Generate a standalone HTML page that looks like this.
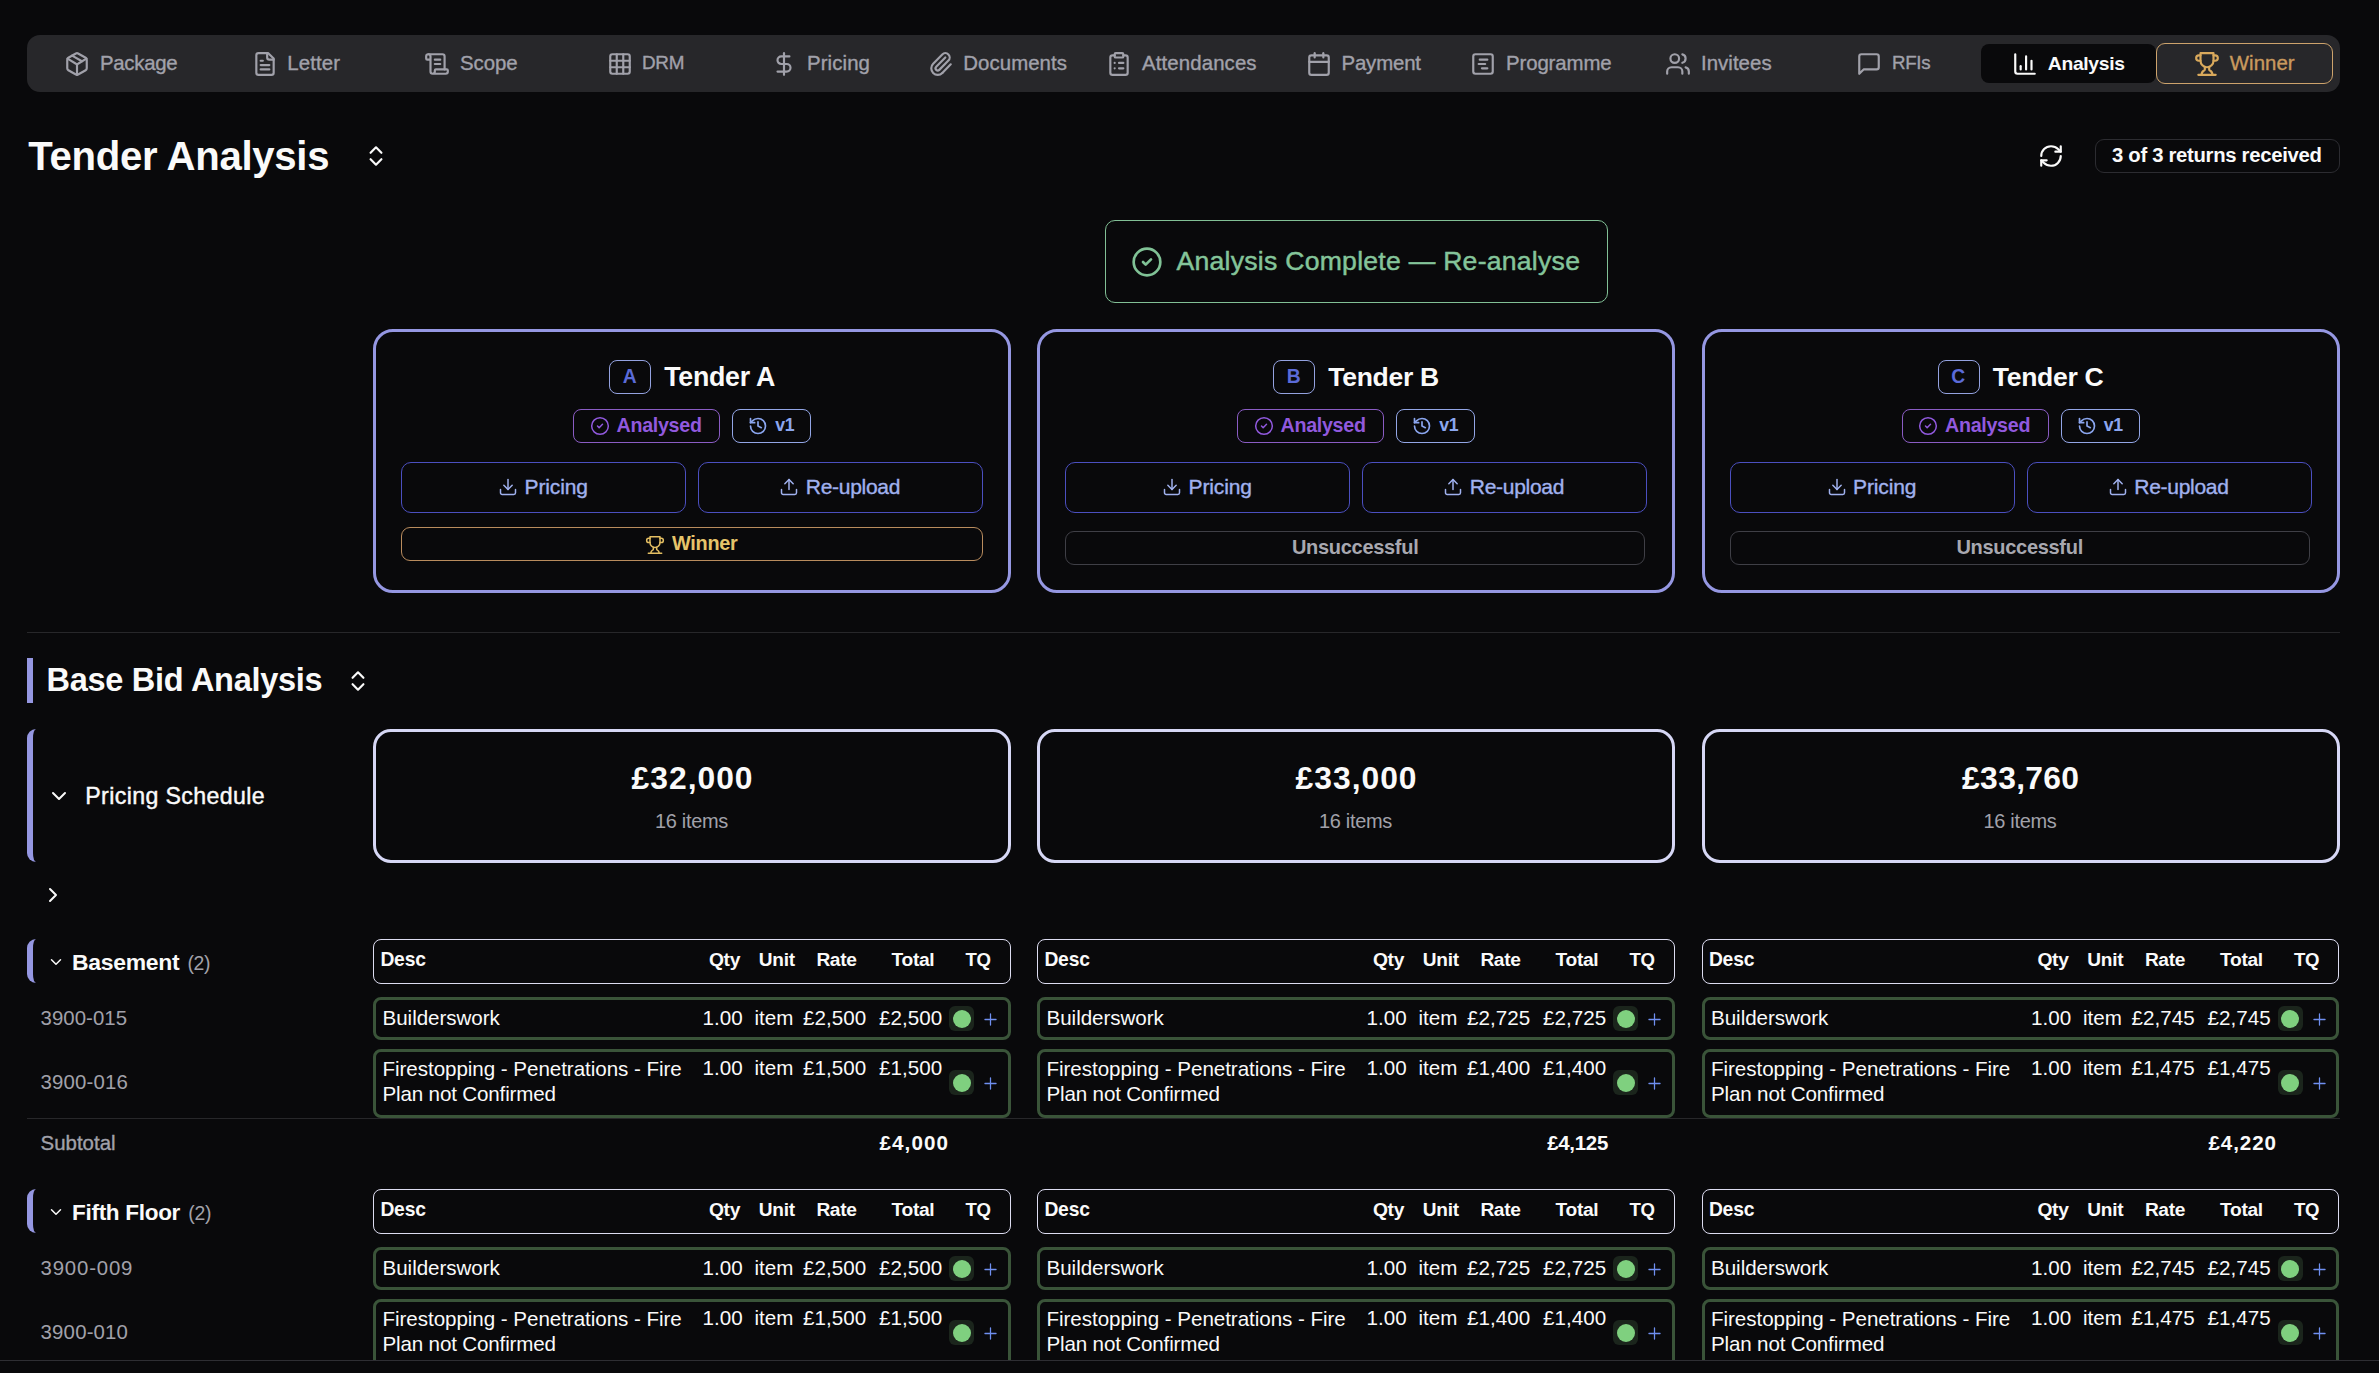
<!DOCTYPE html>
<html><head><meta charset="utf-8"><title>Tender Analysis</title>
<style>
html,body{margin:0;padding:0;}
body{width:2379px;height:1373px;overflow:hidden;background:#09090b;position:relative;font-family:"Liberation Sans",sans-serif;}
.t{position:absolute;white-space:nowrap;line-height:1;}
.b{position:absolute;box-sizing:border-box;}
.i{position:absolute;overflow:visible;}
</style></head><body>
<div class="b" style="left:27.00px;top:35.00px;width:2313.00px;height:57.00px;background:#27272a;border-radius:13px;"></div>
<div class="b" style="left:1981.00px;top:44.00px;width:175.00px;height:39.00px;background:#09090b;border-radius:8px;"></div>
<div class="b" style="left:2156.00px;top:43.00px;width:177.00px;height:41.00px;border:1px solid #cda36c;border-radius:9px;"></div>
<svg class="i" style="left:63.50px;top:50.80px;width:26px;height:26px" viewBox="0 0 24 24" fill="none" stroke="#a1a1aa" stroke-width="2" stroke-linecap="round" stroke-linejoin="round"><path d="M11 21.73a2 2 0 0 0 2 0l7-4A2 2 0 0 0 21 16V8a2 2 0 0 0-1-1.73l-7-4a2 2 0 0 0-2 0l-7 4A2 2 0 0 0 3 8v8a2 2 0 0 0 1 1.73z"/><path d="M12 22V12"/><path d="m3.3 7 7.703 4.734a2 2 0 0 0 1.994 0L20.7 7"/><path d="m7.5 4.27 9 5.15"/></svg>
<div class="t" style="left:100.00px;top:52.93px;font-size:20.40px;color:#a1a1aa;letter-spacing:-0.283px;-webkit-text-stroke:0.36px #a1a1aa;">Package</div>
<svg class="i" style="left:252.00px;top:50.80px;width:26px;height:26px" viewBox="0 0 24 24" fill="none" stroke="#a1a1aa" stroke-width="2" stroke-linecap="round" stroke-linejoin="round"><path d="M15 2H6a2 2 0 0 0-2 2v16a2 2 0 0 0 2 2h12a2 2 0 0 0 2-2V7Z"/><path d="M14 2v4a2 2 0 0 0 2 2h4"/><path d="M10 9H8"/><path d="M16 13H8"/><path d="M16 17H8"/></svg>
<div class="t" style="left:287.30px;top:52.93px;font-size:20.40px;color:#a1a1aa;letter-spacing:0.100px;-webkit-text-stroke:0.36px #a1a1aa;">Letter</div>
<svg class="i" style="left:423.60px;top:50.80px;width:26px;height:26px" viewBox="0 0 24 24" fill="none" stroke="#a1a1aa" stroke-width="2" stroke-linecap="round" stroke-linejoin="round"><path d="M15 12h-5"/><path d="M15 8h-5"/><path d="M19 17V5a2 2 0 0 0-2-2H4"/><path d="M8 21h12a2 2 0 0 0 2-2v-1a1 1 0 0 0-1-1H11a1 1 0 0 0-1 1v1a2 2 0 1 1-4 0V5a2 2 0 1 0-4 0v2a1 1 0 0 0 1 1h3"/></svg>
<div class="t" style="left:460.00px;top:52.93px;font-size:20.40px;color:#a1a1aa;letter-spacing:-0.075px;-webkit-text-stroke:0.36px #a1a1aa;">Scope</div>
<svg class="i" style="left:607.00px;top:50.80px;width:26px;height:26px" viewBox="0 0 24 24" fill="none" stroke="#a1a1aa" stroke-width="2" stroke-linecap="round" stroke-linejoin="round"><rect width="18" height="18" x="3" y="3" rx="2"/><path d="M3 9h18"/><path d="M3 15h18"/><path d="M9 3v18"/><path d="M15 3v18"/></svg>
<div class="t" style="left:642.00px;top:54.23px;font-size:18.86px;color:#a1a1aa;letter-spacing:-0.300px;-webkit-text-stroke:0.36px #a1a1aa;">DRM</div>
<svg class="i" style="left:770.70px;top:50.80px;width:26px;height:26px" viewBox="0 0 24 24" fill="none" stroke="#a1a1aa" stroke-width="2" stroke-linecap="round" stroke-linejoin="round"><line x1="12" x2="12" y1="2" y2="22"/><path d="M17 5H9.5a3.5 3.5 0 0 0 0 7h5a3.5 3.5 0 0 1 0 7H6"/></svg>
<div class="t" style="left:807.00px;top:52.93px;font-size:20.40px;color:#a1a1aa;letter-spacing:0.100px;-webkit-text-stroke:0.36px #a1a1aa;">Pricing</div>
<svg class="i" style="left:927.60px;top:50.80px;width:26px;height:26px" viewBox="0 0 24 24" fill="none" stroke="#a1a1aa" stroke-width="2" stroke-linecap="round" stroke-linejoin="round"><path d="M13.234 20.252 21 12.3"/><path d="m16 6-8.414 8.586a2 2 0 0 0 0 2.828 2 2 0 0 0 2.828 0l8.414-8.586a4 4 0 0 0 0-5.656 4 4 0 0 0-5.656 0l-8.415 8.585a6 6 0 1 0 8.486 8.486"/></svg>
<div class="t" style="left:963.30px;top:52.93px;font-size:20.40px;color:#a1a1aa;letter-spacing:0.063px;-webkit-text-stroke:0.36px #a1a1aa;">Documents</div>
<svg class="i" style="left:1105.60px;top:50.80px;width:26px;height:26px" viewBox="0 0 24 24" fill="none" stroke="#a1a1aa" stroke-width="2" stroke-linecap="round" stroke-linejoin="round"><rect width="8" height="4" x="8" y="2" rx="1" ry="1"/><path d="M16 4h2a2 2 0 0 1 2 2v14a2 2 0 0 1-2 2H6a2 2 0 0 1-2-2V6a2 2 0 0 1 2-2h2"/><path d="M12 11h4"/><path d="M12 16h4"/><path d="M8 11h.01"/><path d="M8 16h.01"/></svg>
<div class="t" style="left:1142.00px;top:52.93px;font-size:20.40px;color:#a1a1aa;letter-spacing:0.120px;-webkit-text-stroke:0.36px #a1a1aa;">Attendances</div>
<svg class="i" style="left:1305.50px;top:50.80px;width:26px;height:26px" viewBox="0 0 24 24" fill="none" stroke="#a1a1aa" stroke-width="2" stroke-linecap="round" stroke-linejoin="round"><path d="M8 2v4"/><path d="M16 2v4"/><rect width="18" height="18" x="3" y="4" rx="2"/><path d="M3 10h18"/></svg>
<div class="t" style="left:1341.50px;top:52.93px;font-size:20.40px;color:#a1a1aa;letter-spacing:-0.167px;-webkit-text-stroke:0.36px #a1a1aa;">Payment</div>
<svg class="i" style="left:1469.50px;top:50.80px;width:26px;height:26px" viewBox="0 0 24 24" fill="none" stroke="#a1a1aa" stroke-width="2" stroke-linecap="round" stroke-linejoin="round"><rect width="18" height="18" x="3" y="3" rx="2"/><path d="M9 8h7"/><path d="M8 12h6"/><path d="M11 16h5"/></svg>
<div class="t" style="left:1506.00px;top:52.93px;font-size:20.40px;color:#a1a1aa;letter-spacing:-0.112px;-webkit-text-stroke:0.36px #a1a1aa;">Programme</div>
<svg class="i" style="left:1664.70px;top:50.80px;width:26px;height:26px" viewBox="0 0 24 24" fill="none" stroke="#a1a1aa" stroke-width="2" stroke-linecap="round" stroke-linejoin="round"><path d="M16 21v-2a4 4 0 0 0-4-4H6a4 4 0 0 0-4 4v2"/><circle cx="9" cy="7" r="4"/><path d="M22 21v-2a4 4 0 0 0-3-3.87"/><path d="M16 3.13a4 4 0 0 1 0 7.75"/></svg>
<div class="t" style="left:1701.00px;top:52.93px;font-size:20.40px;color:#a1a1aa;letter-spacing:0.043px;-webkit-text-stroke:0.36px #a1a1aa;">Invitees</div>
<svg class="i" style="left:1855.50px;top:50.80px;width:26px;height:26px" viewBox="0 0 24 24" fill="none" stroke="#a1a1aa" stroke-width="2" stroke-linecap="round" stroke-linejoin="round"><path d="M21 15a2 2 0 0 1-2 2H7l-4 4V5a2 2 0 0 1 2-2h14a2 2 0 0 1 2 2z"/></svg>
<div class="t" style="left:1892.00px;top:54.33px;font-size:18.74px;color:#a1a1aa;letter-spacing:-0.300px;-webkit-text-stroke:0.36px #a1a1aa;">RFIs</div>
<svg class="i" style="left:2011.70px;top:50.80px;width:26px;height:26px" viewBox="0 0 24 24" fill="none" stroke="#fafafa" stroke-width="2" stroke-linecap="round" stroke-linejoin="round"><path d="M3 3v16a2 2 0 0 0 2 2h16"/><path d="M18 17V9"/><path d="M13 17V5"/><path d="M8 17v-3"/></svg>
<div class="t" style="left:2047.80px;top:53.87px;font-size:19.28px;font-weight:700;color:#fafafa;letter-spacing:-0.300px;">Analysis</div>
<svg class="i" style="left:2193.50px;top:50.80px;width:26px;height:26px" viewBox="0 0 24 24" fill="none" stroke="#d9a95c" stroke-width="2" stroke-linecap="round" stroke-linejoin="round"><path d="M6 9H4.5a2.5 2.5 0 0 1 0-5H6"/><path d="M18 9h1.5a2.5 2.5 0 0 0 0-5H18"/><path d="M4 22h16"/><path d="M10 14.66V17c0 .55-.47.98-.97 1.21C7.85 18.75 7 20.24 7 22"/><path d="M14 14.66V17c0 .55.47.98.97 1.21C16.15 18.75 17 20.24 17 22"/><path d="M18 2H6v7a6 6 0 0 0 12 0V2Z"/></svg>
<div class="t" style="left:2229.80px;top:52.93px;font-size:20.40px;color:#c99a5e;letter-spacing:0.040px;-webkit-text-stroke:0.36px #c99a5e;">Winner</div>
<div class="t" style="left:28.30px;top:137.23px;font-size:40.12px;font-weight:700;color:#fafafa;letter-spacing:-0.300px;">Tender Analysis</div>
<svg class="i" style="left:362.50px;top:142.70px;width:26px;height:26px" viewBox="0 0 24 24" fill="none" stroke="#fafafa" stroke-width="2" stroke-linecap="round" stroke-linejoin="round"><path d="m7 15 5 5 5-5"/><path d="m7 9 5-5 5 5"/></svg>
<svg class="i" style="left:2038.00px;top:143.00px;width:26px;height:26px" viewBox="0 0 24 24" fill="none" stroke="#fafafa" stroke-width="2" stroke-linecap="round" stroke-linejoin="round"><path d="M3 12a9 9 0 0 1 9-9 9.75 9.75 0 0 1 6.74 2.74L21 8"/><path d="M21 3v5h-5"/><path d="M21 12a9 9 0 0 1-9 9 9.75 9.75 0 0 1-6.74-2.74L3 16"/><path d="M8 16H3v5"/></svg>
<div class="b" style="left:2095.00px;top:139.00px;width:245.00px;height:34.00px;border:1px solid #2c2c31;border-radius:9px;"></div>
<div class="t" style="left:2112.00px;top:145.11px;font-size:20.30px;font-weight:700;color:#fafafa;letter-spacing:-0.300px;">3 of 3 returns received</div>
<div class="b" style="left:1105.00px;top:220.00px;width:503.00px;height:83.00px;border:1px solid #82c096;border-radius:10px;"></div>
<svg class="i" style="left:1131.00px;top:246.00px;width:32px;height:32px" viewBox="0 0 24 24" fill="none" stroke="#80c296" stroke-width="2" stroke-linecap="round" stroke-linejoin="round"><circle cx="12" cy="12" r="10"/><path d="m9 12 2 2 4-4"/></svg>
<div class="t" style="left:1176.50px;top:248.08px;font-size:26.60px;color:#84c49a;letter-spacing:0.252px;-webkit-text-stroke:0.47px #84c49a;">Analysis Complete — Re-analyse</div>
<div class="b" style="left:373.00px;top:329.00px;width:638.00px;height:263.50px;border:3px solid #9597e2;border-radius:20px;"></div>
<div class="b" style="left:609.00px;top:360.00px;width:42.00px;height:34.00px;border:1px solid #94a2e0;border-radius:8px;"></div>
<div class="t" style="left:622.75px;top:366.86px;font-size:19.30px;font-weight:700;color:#5b6bd8;letter-spacing:0.000px;">A</div>
<div class="t" style="left:664.30px;top:363.93px;font-size:26.78px;font-weight:700;color:#fafafa;letter-spacing:-0.300px;">Tender A</div>
<div class="b" style="left:573.00px;top:409.00px;width:147.00px;height:34.00px;border:1px solid #8a5cc4;border-radius:8px;"></div>
<svg class="i" style="left:589.50px;top:415.70px;width:20px;height:20px" viewBox="0 0 24 24" fill="none" stroke="#9159de" stroke-width="1.8" stroke-linecap="round" stroke-linejoin="round"><circle cx="12" cy="12" r="10"/><path d="m9 12 2 2 4-4"/></svg>
<div class="t" style="left:616.60px;top:415.65px;font-size:19.67px;font-weight:700;color:#9159de;letter-spacing:-0.300px;">Analysed</div>
<div class="b" style="left:732.00px;top:409.00px;width:79.00px;height:34.00px;border:1px solid #93a6e6;border-radius:8px;"></div>
<svg class="i" style="left:748.40px;top:415.70px;width:20px;height:20px" viewBox="0 0 24 24" fill="none" stroke="#8ba6ef" stroke-width="2" stroke-linecap="round" stroke-linejoin="round"><path d="M3 12a9 9 0 1 0 9-9 9.75 9.75 0 0 0-6.74 2.74L3 8"/><path d="M3 3v5h5"/><path d="M12 7v5l4 2"/></svg>
<div class="t" style="left:775.30px;top:417.30px;font-size:17.71px;font-weight:700;color:#8ba6ef;letter-spacing:-0.300px;">v1</div>
<div class="b" style="left:401.00px;top:462.00px;width:285.00px;height:51.00px;border:1px solid #4b4fc0;border-radius:10px;"></div>
<svg class="i" style="left:498.40px;top:477.40px;width:20px;height:20px" viewBox="0 0 24 24" fill="none" stroke="#a0b1ee" stroke-width="1.8" stroke-linecap="round" stroke-linejoin="round"><path d="M21 15v4a2 2 0 0 1-2 2H5a2 2 0 0 1-2-2v-4"/><polyline points="7 10 12 15 17 10"/><line x1="12" x2="12" y1="15" y2="3"/></svg>
<div class="t" style="left:524.50px;top:476.42px;font-size:21.00px;color:#a0b1ee;letter-spacing:-0.117px;-webkit-text-stroke:0.37px #a0b1ee;">Pricing</div>
<div class="b" style="left:698.00px;top:462.00px;width:285.00px;height:51.00px;border:1px solid #4b4fc0;border-radius:10px;"></div>
<svg class="i" style="left:779.40px;top:477.40px;width:20px;height:20px" viewBox="0 0 24 24" fill="none" stroke="#a0b1ee" stroke-width="1.8" stroke-linecap="round" stroke-linejoin="round"><path d="M21 15v4a2 2 0 0 1-2 2H5a2 2 0 0 1-2-2v-4"/><polyline points="17 8 12 3 7 8"/><line x1="12" x2="12" y1="3" y2="15"/></svg>
<div class="t" style="left:805.80px;top:476.42px;font-size:21.00px;color:#a0b1ee;letter-spacing:-0.288px;-webkit-text-stroke:0.37px #a0b1ee;">Re-upload</div>
<div class="b" style="left:401.00px;top:527.00px;width:582.00px;height:34.00px;border:1px solid #b98c5e;border-radius:9px;"></div>
<svg class="i" style="left:645.40px;top:534.90px;width:20px;height:20px" viewBox="0 0 24 24" fill="none" stroke="#e3be62" stroke-width="1.8" stroke-linecap="round" stroke-linejoin="round"><path d="M6 9H4.5a2.5 2.5 0 0 1 0-5H6"/><path d="M18 9h1.5a2.5 2.5 0 0 0 0-5H18"/><path d="M4 22h16"/><path d="M10 14.66V17c0 .55-.47.98-.97 1.21C7.85 18.75 7 20.24 7 22"/><path d="M14 14.66V17c0 .55.47.98.97 1.21C16.15 18.75 17 20.24 17 22"/><path d="M18 2H6v7a6 6 0 0 0 12 0V2Z"/></svg>
<div class="t" style="left:672.00px;top:534.05px;font-size:19.90px;font-weight:700;color:#e6c46a;letter-spacing:-0.300px;">Winner</div>
<div class="b" style="left:1037.00px;top:329.00px;width:638.00px;height:263.50px;border:3px solid #9597e2;border-radius:20px;"></div>
<div class="b" style="left:1273.00px;top:360.00px;width:42.00px;height:34.00px;border:1px solid #94a2e0;border-radius:8px;"></div>
<div class="t" style="left:1286.75px;top:366.86px;font-size:19.30px;font-weight:700;color:#5b6bd8;letter-spacing:0.000px;">B</div>
<div class="t" style="left:1328.30px;top:364.11px;font-size:26.56px;font-weight:700;color:#fafafa;letter-spacing:-0.300px;">Tender B</div>
<div class="b" style="left:1237.00px;top:409.00px;width:147.00px;height:34.00px;border:1px solid #8a5cc4;border-radius:8px;"></div>
<svg class="i" style="left:1253.50px;top:415.70px;width:20px;height:20px" viewBox="0 0 24 24" fill="none" stroke="#9159de" stroke-width="1.8" stroke-linecap="round" stroke-linejoin="round"><circle cx="12" cy="12" r="10"/><path d="m9 12 2 2 4-4"/></svg>
<div class="t" style="left:1280.60px;top:415.65px;font-size:19.67px;font-weight:700;color:#9159de;letter-spacing:-0.300px;">Analysed</div>
<div class="b" style="left:1396.00px;top:409.00px;width:79.00px;height:34.00px;border:1px solid #93a6e6;border-radius:8px;"></div>
<svg class="i" style="left:1412.40px;top:415.70px;width:20px;height:20px" viewBox="0 0 24 24" fill="none" stroke="#8ba6ef" stroke-width="2" stroke-linecap="round" stroke-linejoin="round"><path d="M3 12a9 9 0 1 0 9-9 9.75 9.75 0 0 0-6.74 2.74L3 8"/><path d="M3 3v5h5"/><path d="M12 7v5l4 2"/></svg>
<div class="t" style="left:1439.30px;top:417.30px;font-size:17.71px;font-weight:700;color:#8ba6ef;letter-spacing:-0.300px;">v1</div>
<div class="b" style="left:1065.00px;top:462.00px;width:285.00px;height:51.00px;border:1px solid #4b4fc0;border-radius:10px;"></div>
<svg class="i" style="left:1162.40px;top:477.40px;width:20px;height:20px" viewBox="0 0 24 24" fill="none" stroke="#a0b1ee" stroke-width="1.8" stroke-linecap="round" stroke-linejoin="round"><path d="M21 15v4a2 2 0 0 1-2 2H5a2 2 0 0 1-2-2v-4"/><polyline points="7 10 12 15 17 10"/><line x1="12" x2="12" y1="15" y2="3"/></svg>
<div class="t" style="left:1188.50px;top:476.42px;font-size:21.00px;color:#a0b1ee;letter-spacing:-0.117px;-webkit-text-stroke:0.37px #a0b1ee;">Pricing</div>
<div class="b" style="left:1362.00px;top:462.00px;width:285.00px;height:51.00px;border:1px solid #4b4fc0;border-radius:10px;"></div>
<svg class="i" style="left:1443.40px;top:477.40px;width:20px;height:20px" viewBox="0 0 24 24" fill="none" stroke="#a0b1ee" stroke-width="1.8" stroke-linecap="round" stroke-linejoin="round"><path d="M21 15v4a2 2 0 0 1-2 2H5a2 2 0 0 1-2-2v-4"/><polyline points="17 8 12 3 7 8"/><line x1="12" x2="12" y1="3" y2="15"/></svg>
<div class="t" style="left:1469.80px;top:476.42px;font-size:21.00px;color:#a0b1ee;letter-spacing:-0.288px;-webkit-text-stroke:0.37px #a0b1ee;">Re-upload</div>
<div class="b" style="left:1065.00px;top:531.00px;width:580.00px;height:34.00px;border:1px solid #3f3f46;border-radius:9px;"></div>
<div class="t" style="left:1291.95px;top:537.48px;font-size:19.99px;font-weight:700;color:#a8a8b0;letter-spacing:-0.291px;">Unsuccessful</div>
<div class="b" style="left:1702.00px;top:329.00px;width:638.00px;height:263.50px;border:3px solid #9597e2;border-radius:20px;"></div>
<div class="b" style="left:1937.50px;top:360.00px;width:42.00px;height:34.00px;border:1px solid #94a2e0;border-radius:8px;"></div>
<div class="t" style="left:1951.25px;top:366.86px;font-size:19.30px;font-weight:700;color:#5b6bd8;letter-spacing:0.000px;">C</div>
<div class="t" style="left:1992.80px;top:364.11px;font-size:26.56px;font-weight:700;color:#fafafa;letter-spacing:-0.300px;">Tender C</div>
<div class="b" style="left:1901.50px;top:409.00px;width:147.00px;height:34.00px;border:1px solid #8a5cc4;border-radius:8px;"></div>
<svg class="i" style="left:1918.00px;top:415.70px;width:20px;height:20px" viewBox="0 0 24 24" fill="none" stroke="#9159de" stroke-width="1.8" stroke-linecap="round" stroke-linejoin="round"><circle cx="12" cy="12" r="10"/><path d="m9 12 2 2 4-4"/></svg>
<div class="t" style="left:1945.10px;top:415.65px;font-size:19.67px;font-weight:700;color:#9159de;letter-spacing:-0.300px;">Analysed</div>
<div class="b" style="left:2060.50px;top:409.00px;width:79.00px;height:34.00px;border:1px solid #93a6e6;border-radius:8px;"></div>
<svg class="i" style="left:2076.90px;top:415.70px;width:20px;height:20px" viewBox="0 0 24 24" fill="none" stroke="#8ba6ef" stroke-width="2" stroke-linecap="round" stroke-linejoin="round"><path d="M3 12a9 9 0 1 0 9-9 9.75 9.75 0 0 0-6.74 2.74L3 8"/><path d="M3 3v5h5"/><path d="M12 7v5l4 2"/></svg>
<div class="t" style="left:2103.80px;top:417.30px;font-size:17.71px;font-weight:700;color:#8ba6ef;letter-spacing:-0.300px;">v1</div>
<div class="b" style="left:1729.50px;top:462.00px;width:285.00px;height:51.00px;border:1px solid #4b4fc0;border-radius:10px;"></div>
<svg class="i" style="left:1826.90px;top:477.40px;width:20px;height:20px" viewBox="0 0 24 24" fill="none" stroke="#a0b1ee" stroke-width="1.8" stroke-linecap="round" stroke-linejoin="round"><path d="M21 15v4a2 2 0 0 1-2 2H5a2 2 0 0 1-2-2v-4"/><polyline points="7 10 12 15 17 10"/><line x1="12" x2="12" y1="15" y2="3"/></svg>
<div class="t" style="left:1853.00px;top:476.42px;font-size:21.00px;color:#a0b1ee;letter-spacing:-0.117px;-webkit-text-stroke:0.37px #a0b1ee;">Pricing</div>
<div class="b" style="left:2026.50px;top:462.00px;width:285.00px;height:51.00px;border:1px solid #4b4fc0;border-radius:10px;"></div>
<svg class="i" style="left:2107.90px;top:477.40px;width:20px;height:20px" viewBox="0 0 24 24" fill="none" stroke="#a0b1ee" stroke-width="1.8" stroke-linecap="round" stroke-linejoin="round"><path d="M21 15v4a2 2 0 0 1-2 2H5a2 2 0 0 1-2-2v-4"/><polyline points="17 8 12 3 7 8"/><line x1="12" x2="12" y1="3" y2="15"/></svg>
<div class="t" style="left:2134.30px;top:476.42px;font-size:21.00px;color:#a0b1ee;letter-spacing:-0.288px;-webkit-text-stroke:0.37px #a0b1ee;">Re-upload</div>
<div class="b" style="left:1729.50px;top:531.00px;width:580.00px;height:34.00px;border:1px solid #3f3f46;border-radius:9px;"></div>
<div class="t" style="left:1956.45px;top:537.48px;font-size:19.99px;font-weight:700;color:#a8a8b0;letter-spacing:-0.291px;">Unsuccessful</div>
<div class="b" style="left:27.00px;top:632.00px;width:2313.00px;height:1.00px;background:#27272a;"></div>
<div class="b" style="left:27.00px;top:658.00px;width:6.00px;height:45.00px;background:#9597e2;"></div>
<div class="t" style="left:46.50px;top:663.93px;font-size:32.56px;font-weight:700;color:#fafafa;letter-spacing:-0.300px;">Base Bid Analysis</div>
<svg class="i" style="left:344.50px;top:667.50px;width:26px;height:26px" viewBox="0 0 24 24" fill="none" stroke="#fafafa" stroke-width="2" stroke-linecap="round" stroke-linejoin="round"><path d="m7 15 5 5 5-5"/><path d="m7 9 5-5 5 5"/></svg>
<div class="b" style="left:27.00px;top:729.00px;width:60.00px;height:133.00px;border-left:6px solid #9597e2;border-radius:9px;"></div>
<svg class="i" style="left:46.80px;top:784.00px;width:24px;height:24px" viewBox="0 0 24 24" fill="none" stroke="#fafafa" stroke-width="2" stroke-linecap="round" stroke-linejoin="round"><path d="m6 9 6 6 6-6"/></svg>
<div class="t" style="left:85.30px;top:784.66px;font-size:23.20px;color:#fafafa;letter-spacing:0.360px;-webkit-text-stroke:0.41px #fafafa;">Pricing Schedule</div>
<div class="b" style="left:373.00px;top:729.00px;width:638.00px;height:134.00px;border:3px solid #d6d7f5;border-radius:18px;"></div>
<div class="t" style="left:631.60px;top:763.07px;font-size:31.80px;font-weight:700;color:#fafafa;letter-spacing:1.000px;">£32,000</div>
<div class="t" style="left:654.90px;top:810.88px;font-size:19.99px;color:#a1a1aa;letter-spacing:-0.300px;">16 items</div>
<div class="b" style="left:1037.00px;top:729.00px;width:638.00px;height:134.00px;border:3px solid #d6d7f5;border-radius:18px;"></div>
<div class="t" style="left:1295.60px;top:763.07px;font-size:31.80px;font-weight:700;color:#fafafa;letter-spacing:1.000px;">£33,000</div>
<div class="t" style="left:1318.90px;top:810.88px;font-size:19.99px;color:#a1a1aa;letter-spacing:-0.300px;">16 items</div>
<div class="b" style="left:1702.00px;top:729.00px;width:638.00px;height:134.00px;border:3px solid #d6d7f5;border-radius:18px;"></div>
<div class="t" style="left:1962.10px;top:763.07px;font-size:31.80px;font-weight:700;color:#fafafa;letter-spacing:0.333px;">£33,760</div>
<div class="t" style="left:1983.40px;top:810.88px;font-size:19.99px;color:#a1a1aa;letter-spacing:-0.300px;">16 items</div>
<svg class="i" style="left:40.70px;top:882.70px;width:24px;height:24px" viewBox="0 0 24 24" fill="none" stroke="#fafafa" stroke-width="2" stroke-linecap="round" stroke-linejoin="round"><path d="m9 18 6-6-6-6"/></svg>
<div class="b" style="left:27.00px;top:939.00px;width:60.00px;height:44.00px;border-left:6px solid #9597e2;border-radius:9px;"></div>
<svg class="i" style="left:46.50px;top:952.60px;width:18px;height:18px" viewBox="0 0 24 24" fill="none" stroke="#fafafa" stroke-width="2" stroke-linecap="round" stroke-linejoin="round"><path d="m6 9 6 6 6-6"/></svg>
<div class="t" style="left:72.00px;top:951.18px;font-size:22.94px;font-weight:700;color:#fafafa;letter-spacing:-0.300px;">Basement</div>
<div class="t" style="left:187.40px;top:954.12px;font-size:19.46px;color:#a1a1aa;letter-spacing:-0.300px;">(2)</div>
<div class="t" style="left:40.60px;top:1007.73px;font-size:20.40px;color:#a1a1aa;letter-spacing:0.029px;">3900-015</div>
<div class="t" style="left:40.60px;top:1071.73px;font-size:20.40px;color:#a1a1aa;letter-spacing:0.157px;">3900-016</div>
<div class="b" style="left:27.00px;top:1118.00px;width:2313.00px;height:1.00px;background:#27272a;"></div>
<div class="t" style="left:40.60px;top:1132.73px;font-size:20.40px;color:#a1a1aa;letter-spacing:0.014px;-webkit-text-stroke:0.36px #a1a1aa;">Subtotal</div>
<div class="b" style="left:373.00px;top:939.00px;width:637.50px;height:44.50px;border:1.5px solid #dcdcf0;border-radius:8px;"></div>
<div class="t" style="left:380.40px;top:950.06px;font-size:19.30px;font-weight:700;color:#fafafa;letter-spacing:-0.200px;">Desc</div>
<div class="t" style="left:709.00px;top:950.11px;font-size:19.24px;font-weight:700;color:#fafafa;letter-spacing:-0.350px;">Qty</div>
<div class="t" style="left:758.80px;top:950.23px;font-size:19.09px;font-weight:700;color:#fafafa;letter-spacing:-0.300px;">Unit</div>
<div class="t" style="left:816.40px;top:950.18px;font-size:19.16px;font-weight:700;color:#fafafa;letter-spacing:-0.367px;">Rate</div>
<div class="t" style="left:891.60px;top:950.13px;font-size:19.21px;font-weight:700;color:#fafafa;letter-spacing:-0.325px;">Total</div>
<div class="t" style="left:965.45px;top:950.67px;font-size:18.58px;font-weight:700;color:#fafafa;letter-spacing:-0.300px;">TQ</div>
<div class="b" style="left:373.00px;top:997.40px;width:637.50px;height:43.00px;border:3px solid #3a5439;border-radius:8px;"></div>
<div class="t" style="left:382.50px;top:1007.86px;font-size:20.60px;color:#fafafa;letter-spacing:-0.045px;">Builderswork</div>
<div class="t" style="left:702.55px;top:1007.86px;font-size:20.60px;color:#fafafa;letter-spacing:0.000px;">1.00</div>
<div class="t" style="left:754.55px;top:1007.86px;font-size:20.60px;color:#fafafa;letter-spacing:0.000px;">item</div>
<div class="t" style="left:803.10px;top:1007.86px;font-size:20.60px;color:#fafafa;letter-spacing:0.000px;">£2,500</div>
<div class="t" style="left:879.10px;top:1007.86px;font-size:20.60px;color:#fafafa;letter-spacing:0.000px;">£2,500</div>
<div class="b" style="left:949.30px;top:1006.40px;width:25.00px;height:25.00px;background:#1b251c;border-radius:6px;"></div>
<div class="b" style="left:952.70px;top:1009.90px;width:18.00px;height:18.00px;background:#7fd07f;border-radius:50%;"></div>
<svg class="i" style="left:981.10px;top:1010.30px;width:19px;height:19px" viewBox="0 0 24 24" fill="none" stroke="#6f8ff0" stroke-width="1.6" stroke-linecap="round" stroke-linejoin="round"><path d="M5 12h14"/><path d="M12 5v14"/></svg>
<div class="b" style="left:373.00px;top:1048.60px;width:637.50px;height:69.50px;border:3px solid #3a5439;border-radius:8px;"></div>
<div class="t" style="left:382.50px;top:1059.06px;font-size:20.60px;color:#fafafa;letter-spacing:-0.055px;">Firestopping - Penetrations - Fire</div>
<div class="t" style="left:382.50px;top:1084.36px;font-size:20.60px;color:#fafafa;letter-spacing:-0.165px;">Plan not Confirmed</div>
<div class="t" style="left:702.55px;top:1058.16px;font-size:20.60px;color:#fafafa;letter-spacing:0.000px;">1.00</div>
<div class="t" style="left:754.55px;top:1058.16px;font-size:20.60px;color:#fafafa;letter-spacing:0.000px;">item</div>
<div class="t" style="left:803.10px;top:1058.16px;font-size:20.60px;color:#fafafa;letter-spacing:0.000px;">£1,500</div>
<div class="t" style="left:879.10px;top:1058.16px;font-size:20.60px;color:#fafafa;letter-spacing:0.000px;">£1,500</div>
<div class="b" style="left:949.30px;top:1070.00px;width:25.00px;height:25.00px;background:#1b251c;border-radius:6px;"></div>
<div class="b" style="left:952.70px;top:1073.50px;width:18.00px;height:18.00px;background:#7fd07f;border-radius:50%;"></div>
<svg class="i" style="left:981.10px;top:1073.50px;width:19px;height:19px" viewBox="0 0 24 24" fill="none" stroke="#6f8ff0" stroke-width="1.6" stroke-linecap="round" stroke-linejoin="round"><path d="M5 12h14"/><path d="M12 5v14"/></svg>
<div class="t" style="left:879.40px;top:1132.56px;font-size:20.60px;font-weight:700;color:#fafafa;letter-spacing:1.120px;">£4,000</div>
<div class="b" style="left:1037.00px;top:939.00px;width:637.50px;height:44.50px;border:1.5px solid #dcdcf0;border-radius:8px;"></div>
<div class="t" style="left:1044.40px;top:950.06px;font-size:19.30px;font-weight:700;color:#fafafa;letter-spacing:-0.200px;">Desc</div>
<div class="t" style="left:1373.00px;top:950.11px;font-size:19.24px;font-weight:700;color:#fafafa;letter-spacing:-0.350px;">Qty</div>
<div class="t" style="left:1422.80px;top:950.23px;font-size:19.09px;font-weight:700;color:#fafafa;letter-spacing:-0.300px;">Unit</div>
<div class="t" style="left:1480.40px;top:950.18px;font-size:19.16px;font-weight:700;color:#fafafa;letter-spacing:-0.367px;">Rate</div>
<div class="t" style="left:1555.60px;top:950.13px;font-size:19.21px;font-weight:700;color:#fafafa;letter-spacing:-0.325px;">Total</div>
<div class="t" style="left:1629.45px;top:950.67px;font-size:18.58px;font-weight:700;color:#fafafa;letter-spacing:-0.300px;">TQ</div>
<div class="b" style="left:1037.00px;top:997.40px;width:637.50px;height:43.00px;border:3px solid #3a5439;border-radius:8px;"></div>
<div class="t" style="left:1046.50px;top:1007.86px;font-size:20.60px;color:#fafafa;letter-spacing:-0.045px;">Builderswork</div>
<div class="t" style="left:1366.55px;top:1007.86px;font-size:20.60px;color:#fafafa;letter-spacing:0.000px;">1.00</div>
<div class="t" style="left:1418.55px;top:1007.86px;font-size:20.60px;color:#fafafa;letter-spacing:0.000px;">item</div>
<div class="t" style="left:1467.10px;top:1007.86px;font-size:20.60px;color:#fafafa;letter-spacing:0.000px;">£2,725</div>
<div class="t" style="left:1543.10px;top:1007.86px;font-size:20.60px;color:#fafafa;letter-spacing:0.000px;">£2,725</div>
<div class="b" style="left:1613.30px;top:1006.40px;width:25.00px;height:25.00px;background:#1b251c;border-radius:6px;"></div>
<div class="b" style="left:1616.70px;top:1009.90px;width:18.00px;height:18.00px;background:#7fd07f;border-radius:50%;"></div>
<svg class="i" style="left:1645.10px;top:1010.30px;width:19px;height:19px" viewBox="0 0 24 24" fill="none" stroke="#6f8ff0" stroke-width="1.6" stroke-linecap="round" stroke-linejoin="round"><path d="M5 12h14"/><path d="M12 5v14"/></svg>
<div class="b" style="left:1037.00px;top:1048.60px;width:637.50px;height:69.50px;border:3px solid #3a5439;border-radius:8px;"></div>
<div class="t" style="left:1046.50px;top:1059.06px;font-size:20.60px;color:#fafafa;letter-spacing:-0.055px;">Firestopping - Penetrations - Fire</div>
<div class="t" style="left:1046.50px;top:1084.36px;font-size:20.60px;color:#fafafa;letter-spacing:-0.165px;">Plan not Confirmed</div>
<div class="t" style="left:1366.55px;top:1058.16px;font-size:20.60px;color:#fafafa;letter-spacing:0.000px;">1.00</div>
<div class="t" style="left:1418.55px;top:1058.16px;font-size:20.60px;color:#fafafa;letter-spacing:0.000px;">item</div>
<div class="t" style="left:1467.10px;top:1058.16px;font-size:20.60px;color:#fafafa;letter-spacing:0.000px;">£1,400</div>
<div class="t" style="left:1543.10px;top:1058.16px;font-size:20.60px;color:#fafafa;letter-spacing:0.000px;">£1,400</div>
<div class="b" style="left:1613.30px;top:1070.00px;width:25.00px;height:25.00px;background:#1b251c;border-radius:6px;"></div>
<div class="b" style="left:1616.70px;top:1073.50px;width:18.00px;height:18.00px;background:#7fd07f;border-radius:50%;"></div>
<svg class="i" style="left:1645.10px;top:1073.50px;width:19px;height:19px" viewBox="0 0 24 24" fill="none" stroke="#6f8ff0" stroke-width="1.6" stroke-linecap="round" stroke-linejoin="round"><path d="M5 12h14"/><path d="M12 5v14"/></svg>
<div class="t" style="left:1547.20px;top:1132.70px;font-size:20.44px;font-weight:700;color:#fafafa;letter-spacing:-0.280px;">£4,125</div>
<div class="b" style="left:1701.50px;top:939.00px;width:637.50px;height:44.50px;border:1.5px solid #dcdcf0;border-radius:8px;"></div>
<div class="t" style="left:1708.90px;top:950.06px;font-size:19.30px;font-weight:700;color:#fafafa;letter-spacing:-0.200px;">Desc</div>
<div class="t" style="left:2037.50px;top:950.11px;font-size:19.24px;font-weight:700;color:#fafafa;letter-spacing:-0.350px;">Qty</div>
<div class="t" style="left:2087.30px;top:950.23px;font-size:19.09px;font-weight:700;color:#fafafa;letter-spacing:-0.300px;">Unit</div>
<div class="t" style="left:2144.90px;top:950.18px;font-size:19.16px;font-weight:700;color:#fafafa;letter-spacing:-0.367px;">Rate</div>
<div class="t" style="left:2220.10px;top:950.13px;font-size:19.21px;font-weight:700;color:#fafafa;letter-spacing:-0.325px;">Total</div>
<div class="t" style="left:2293.95px;top:950.67px;font-size:18.58px;font-weight:700;color:#fafafa;letter-spacing:-0.300px;">TQ</div>
<div class="b" style="left:1701.50px;top:997.40px;width:637.50px;height:43.00px;border:3px solid #3a5439;border-radius:8px;"></div>
<div class="t" style="left:1711.00px;top:1007.86px;font-size:20.60px;color:#fafafa;letter-spacing:-0.045px;">Builderswork</div>
<div class="t" style="left:2031.05px;top:1007.86px;font-size:20.60px;color:#fafafa;letter-spacing:0.000px;">1.00</div>
<div class="t" style="left:2083.05px;top:1007.86px;font-size:20.60px;color:#fafafa;letter-spacing:0.000px;">item</div>
<div class="t" style="left:2131.60px;top:1007.86px;font-size:20.60px;color:#fafafa;letter-spacing:0.000px;">£2,745</div>
<div class="t" style="left:2207.60px;top:1007.86px;font-size:20.60px;color:#fafafa;letter-spacing:0.000px;">£2,745</div>
<div class="b" style="left:2277.80px;top:1006.40px;width:25.00px;height:25.00px;background:#1b251c;border-radius:6px;"></div>
<div class="b" style="left:2281.20px;top:1009.90px;width:18.00px;height:18.00px;background:#7fd07f;border-radius:50%;"></div>
<svg class="i" style="left:2309.60px;top:1010.30px;width:19px;height:19px" viewBox="0 0 24 24" fill="none" stroke="#6f8ff0" stroke-width="1.6" stroke-linecap="round" stroke-linejoin="round"><path d="M5 12h14"/><path d="M12 5v14"/></svg>
<div class="b" style="left:1701.50px;top:1048.60px;width:637.50px;height:69.50px;border:3px solid #3a5439;border-radius:8px;"></div>
<div class="t" style="left:1711.00px;top:1059.06px;font-size:20.60px;color:#fafafa;letter-spacing:-0.055px;">Firestopping - Penetrations - Fire</div>
<div class="t" style="left:1711.00px;top:1084.36px;font-size:20.60px;color:#fafafa;letter-spacing:-0.165px;">Plan not Confirmed</div>
<div class="t" style="left:2031.05px;top:1058.16px;font-size:20.60px;color:#fafafa;letter-spacing:0.000px;">1.00</div>
<div class="t" style="left:2083.05px;top:1058.16px;font-size:20.60px;color:#fafafa;letter-spacing:0.000px;">item</div>
<div class="t" style="left:2131.60px;top:1058.16px;font-size:20.60px;color:#fafafa;letter-spacing:0.000px;">£1,475</div>
<div class="t" style="left:2207.60px;top:1058.16px;font-size:20.60px;color:#fafafa;letter-spacing:0.000px;">£1,475</div>
<div class="b" style="left:2277.80px;top:1070.00px;width:25.00px;height:25.00px;background:#1b251c;border-radius:6px;"></div>
<div class="b" style="left:2281.20px;top:1073.50px;width:18.00px;height:18.00px;background:#7fd07f;border-radius:50%;"></div>
<svg class="i" style="left:2309.60px;top:1073.50px;width:19px;height:19px" viewBox="0 0 24 24" fill="none" stroke="#6f8ff0" stroke-width="1.6" stroke-linecap="round" stroke-linejoin="round"><path d="M5 12h14"/><path d="M12 5v14"/></svg>
<div class="t" style="left:2208.40px;top:1132.56px;font-size:20.60px;font-weight:700;color:#fafafa;letter-spacing:0.920px;">£4,220</div>
<div class="b" style="left:27.00px;top:1189.00px;width:60.00px;height:44.00px;border-left:6px solid #9597e2;border-radius:9px;"></div>
<svg class="i" style="left:46.50px;top:1202.60px;width:18px;height:18px" viewBox="0 0 24 24" fill="none" stroke="#fafafa" stroke-width="2" stroke-linecap="round" stroke-linejoin="round"><path d="m6 9 6 6 6-6"/></svg>
<div class="t" style="left:72.00px;top:1201.52px;font-size:22.54px;font-weight:700;color:#fafafa;letter-spacing:-0.300px;">Fifth Floor</div>
<div class="t" style="left:188.30px;top:1204.12px;font-size:19.46px;color:#a1a1aa;letter-spacing:-0.300px;">(2)</div>
<div class="t" style="left:40.60px;top:1257.73px;font-size:20.40px;color:#a1a1aa;letter-spacing:0.800px;">3900-009</div>
<div class="t" style="left:40.60px;top:1321.73px;font-size:20.40px;color:#a1a1aa;letter-spacing:0.171px;">3900-010</div>
<div class="b" style="left:373.00px;top:1189.00px;width:637.50px;height:44.50px;border:1.5px solid #dcdcf0;border-radius:8px;"></div>
<div class="t" style="left:380.40px;top:1200.06px;font-size:19.30px;font-weight:700;color:#fafafa;letter-spacing:-0.200px;">Desc</div>
<div class="t" style="left:709.00px;top:1200.11px;font-size:19.24px;font-weight:700;color:#fafafa;letter-spacing:-0.350px;">Qty</div>
<div class="t" style="left:758.80px;top:1200.23px;font-size:19.09px;font-weight:700;color:#fafafa;letter-spacing:-0.300px;">Unit</div>
<div class="t" style="left:816.40px;top:1200.18px;font-size:19.16px;font-weight:700;color:#fafafa;letter-spacing:-0.367px;">Rate</div>
<div class="t" style="left:891.60px;top:1200.13px;font-size:19.21px;font-weight:700;color:#fafafa;letter-spacing:-0.325px;">Total</div>
<div class="t" style="left:965.45px;top:1200.67px;font-size:18.58px;font-weight:700;color:#fafafa;letter-spacing:-0.300px;">TQ</div>
<div class="b" style="left:373.00px;top:1247.40px;width:637.50px;height:43.00px;border:3px solid #3a5439;border-radius:8px;"></div>
<div class="t" style="left:382.50px;top:1257.86px;font-size:20.60px;color:#fafafa;letter-spacing:-0.045px;">Builderswork</div>
<div class="t" style="left:702.55px;top:1257.86px;font-size:20.60px;color:#fafafa;letter-spacing:0.000px;">1.00</div>
<div class="t" style="left:754.55px;top:1257.86px;font-size:20.60px;color:#fafafa;letter-spacing:0.000px;">item</div>
<div class="t" style="left:803.10px;top:1257.86px;font-size:20.60px;color:#fafafa;letter-spacing:0.000px;">£2,500</div>
<div class="t" style="left:879.10px;top:1257.86px;font-size:20.60px;color:#fafafa;letter-spacing:0.000px;">£2,500</div>
<div class="b" style="left:949.30px;top:1256.40px;width:25.00px;height:25.00px;background:#1b251c;border-radius:6px;"></div>
<div class="b" style="left:952.70px;top:1259.90px;width:18.00px;height:18.00px;background:#7fd07f;border-radius:50%;"></div>
<svg class="i" style="left:981.10px;top:1260.30px;width:19px;height:19px" viewBox="0 0 24 24" fill="none" stroke="#6f8ff0" stroke-width="1.6" stroke-linecap="round" stroke-linejoin="round"><path d="M5 12h14"/><path d="M12 5v14"/></svg>
<div class="b" style="left:373.00px;top:1298.60px;width:637.50px;height:69.50px;border:3px solid #3a5439;border-radius:8px;"></div>
<div class="t" style="left:382.50px;top:1309.06px;font-size:20.60px;color:#fafafa;letter-spacing:-0.055px;">Firestopping - Penetrations - Fire</div>
<div class="t" style="left:382.50px;top:1334.36px;font-size:20.60px;color:#fafafa;letter-spacing:-0.165px;">Plan not Confirmed</div>
<div class="t" style="left:702.55px;top:1308.16px;font-size:20.60px;color:#fafafa;letter-spacing:0.000px;">1.00</div>
<div class="t" style="left:754.55px;top:1308.16px;font-size:20.60px;color:#fafafa;letter-spacing:0.000px;">item</div>
<div class="t" style="left:803.10px;top:1308.16px;font-size:20.60px;color:#fafafa;letter-spacing:0.000px;">£1,500</div>
<div class="t" style="left:879.10px;top:1308.16px;font-size:20.60px;color:#fafafa;letter-spacing:0.000px;">£1,500</div>
<div class="b" style="left:949.30px;top:1320.00px;width:25.00px;height:25.00px;background:#1b251c;border-radius:6px;"></div>
<div class="b" style="left:952.70px;top:1323.50px;width:18.00px;height:18.00px;background:#7fd07f;border-radius:50%;"></div>
<svg class="i" style="left:981.10px;top:1323.50px;width:19px;height:19px" viewBox="0 0 24 24" fill="none" stroke="#6f8ff0" stroke-width="1.6" stroke-linecap="round" stroke-linejoin="round"><path d="M5 12h14"/><path d="M12 5v14"/></svg>
<div class="b" style="left:1037.00px;top:1189.00px;width:637.50px;height:44.50px;border:1.5px solid #dcdcf0;border-radius:8px;"></div>
<div class="t" style="left:1044.40px;top:1200.06px;font-size:19.30px;font-weight:700;color:#fafafa;letter-spacing:-0.200px;">Desc</div>
<div class="t" style="left:1373.00px;top:1200.11px;font-size:19.24px;font-weight:700;color:#fafafa;letter-spacing:-0.350px;">Qty</div>
<div class="t" style="left:1422.80px;top:1200.23px;font-size:19.09px;font-weight:700;color:#fafafa;letter-spacing:-0.300px;">Unit</div>
<div class="t" style="left:1480.40px;top:1200.18px;font-size:19.16px;font-weight:700;color:#fafafa;letter-spacing:-0.367px;">Rate</div>
<div class="t" style="left:1555.60px;top:1200.13px;font-size:19.21px;font-weight:700;color:#fafafa;letter-spacing:-0.325px;">Total</div>
<div class="t" style="left:1629.45px;top:1200.67px;font-size:18.58px;font-weight:700;color:#fafafa;letter-spacing:-0.300px;">TQ</div>
<div class="b" style="left:1037.00px;top:1247.40px;width:637.50px;height:43.00px;border:3px solid #3a5439;border-radius:8px;"></div>
<div class="t" style="left:1046.50px;top:1257.86px;font-size:20.60px;color:#fafafa;letter-spacing:-0.045px;">Builderswork</div>
<div class="t" style="left:1366.55px;top:1257.86px;font-size:20.60px;color:#fafafa;letter-spacing:0.000px;">1.00</div>
<div class="t" style="left:1418.55px;top:1257.86px;font-size:20.60px;color:#fafafa;letter-spacing:0.000px;">item</div>
<div class="t" style="left:1467.10px;top:1257.86px;font-size:20.60px;color:#fafafa;letter-spacing:0.000px;">£2,725</div>
<div class="t" style="left:1543.10px;top:1257.86px;font-size:20.60px;color:#fafafa;letter-spacing:0.000px;">£2,725</div>
<div class="b" style="left:1613.30px;top:1256.40px;width:25.00px;height:25.00px;background:#1b251c;border-radius:6px;"></div>
<div class="b" style="left:1616.70px;top:1259.90px;width:18.00px;height:18.00px;background:#7fd07f;border-radius:50%;"></div>
<svg class="i" style="left:1645.10px;top:1260.30px;width:19px;height:19px" viewBox="0 0 24 24" fill="none" stroke="#6f8ff0" stroke-width="1.6" stroke-linecap="round" stroke-linejoin="round"><path d="M5 12h14"/><path d="M12 5v14"/></svg>
<div class="b" style="left:1037.00px;top:1298.60px;width:637.50px;height:69.50px;border:3px solid #3a5439;border-radius:8px;"></div>
<div class="t" style="left:1046.50px;top:1309.06px;font-size:20.60px;color:#fafafa;letter-spacing:-0.055px;">Firestopping - Penetrations - Fire</div>
<div class="t" style="left:1046.50px;top:1334.36px;font-size:20.60px;color:#fafafa;letter-spacing:-0.165px;">Plan not Confirmed</div>
<div class="t" style="left:1366.55px;top:1308.16px;font-size:20.60px;color:#fafafa;letter-spacing:0.000px;">1.00</div>
<div class="t" style="left:1418.55px;top:1308.16px;font-size:20.60px;color:#fafafa;letter-spacing:0.000px;">item</div>
<div class="t" style="left:1467.10px;top:1308.16px;font-size:20.60px;color:#fafafa;letter-spacing:0.000px;">£1,400</div>
<div class="t" style="left:1543.10px;top:1308.16px;font-size:20.60px;color:#fafafa;letter-spacing:0.000px;">£1,400</div>
<div class="b" style="left:1613.30px;top:1320.00px;width:25.00px;height:25.00px;background:#1b251c;border-radius:6px;"></div>
<div class="b" style="left:1616.70px;top:1323.50px;width:18.00px;height:18.00px;background:#7fd07f;border-radius:50%;"></div>
<svg class="i" style="left:1645.10px;top:1323.50px;width:19px;height:19px" viewBox="0 0 24 24" fill="none" stroke="#6f8ff0" stroke-width="1.6" stroke-linecap="round" stroke-linejoin="round"><path d="M5 12h14"/><path d="M12 5v14"/></svg>
<div class="b" style="left:1701.50px;top:1189.00px;width:637.50px;height:44.50px;border:1.5px solid #dcdcf0;border-radius:8px;"></div>
<div class="t" style="left:1708.90px;top:1200.06px;font-size:19.30px;font-weight:700;color:#fafafa;letter-spacing:-0.200px;">Desc</div>
<div class="t" style="left:2037.50px;top:1200.11px;font-size:19.24px;font-weight:700;color:#fafafa;letter-spacing:-0.350px;">Qty</div>
<div class="t" style="left:2087.30px;top:1200.23px;font-size:19.09px;font-weight:700;color:#fafafa;letter-spacing:-0.300px;">Unit</div>
<div class="t" style="left:2144.90px;top:1200.18px;font-size:19.16px;font-weight:700;color:#fafafa;letter-spacing:-0.367px;">Rate</div>
<div class="t" style="left:2220.10px;top:1200.13px;font-size:19.21px;font-weight:700;color:#fafafa;letter-spacing:-0.325px;">Total</div>
<div class="t" style="left:2293.95px;top:1200.67px;font-size:18.58px;font-weight:700;color:#fafafa;letter-spacing:-0.300px;">TQ</div>
<div class="b" style="left:1701.50px;top:1247.40px;width:637.50px;height:43.00px;border:3px solid #3a5439;border-radius:8px;"></div>
<div class="t" style="left:1711.00px;top:1257.86px;font-size:20.60px;color:#fafafa;letter-spacing:-0.045px;">Builderswork</div>
<div class="t" style="left:2031.05px;top:1257.86px;font-size:20.60px;color:#fafafa;letter-spacing:0.000px;">1.00</div>
<div class="t" style="left:2083.05px;top:1257.86px;font-size:20.60px;color:#fafafa;letter-spacing:0.000px;">item</div>
<div class="t" style="left:2131.60px;top:1257.86px;font-size:20.60px;color:#fafafa;letter-spacing:0.000px;">£2,745</div>
<div class="t" style="left:2207.60px;top:1257.86px;font-size:20.60px;color:#fafafa;letter-spacing:0.000px;">£2,745</div>
<div class="b" style="left:2277.80px;top:1256.40px;width:25.00px;height:25.00px;background:#1b251c;border-radius:6px;"></div>
<div class="b" style="left:2281.20px;top:1259.90px;width:18.00px;height:18.00px;background:#7fd07f;border-radius:50%;"></div>
<svg class="i" style="left:2309.60px;top:1260.30px;width:19px;height:19px" viewBox="0 0 24 24" fill="none" stroke="#6f8ff0" stroke-width="1.6" stroke-linecap="round" stroke-linejoin="round"><path d="M5 12h14"/><path d="M12 5v14"/></svg>
<div class="b" style="left:1701.50px;top:1298.60px;width:637.50px;height:69.50px;border:3px solid #3a5439;border-radius:8px;"></div>
<div class="t" style="left:1711.00px;top:1309.06px;font-size:20.60px;color:#fafafa;letter-spacing:-0.055px;">Firestopping - Penetrations - Fire</div>
<div class="t" style="left:1711.00px;top:1334.36px;font-size:20.60px;color:#fafafa;letter-spacing:-0.165px;">Plan not Confirmed</div>
<div class="t" style="left:2031.05px;top:1308.16px;font-size:20.60px;color:#fafafa;letter-spacing:0.000px;">1.00</div>
<div class="t" style="left:2083.05px;top:1308.16px;font-size:20.60px;color:#fafafa;letter-spacing:0.000px;">item</div>
<div class="t" style="left:2131.60px;top:1308.16px;font-size:20.60px;color:#fafafa;letter-spacing:0.000px;">£1,475</div>
<div class="t" style="left:2207.60px;top:1308.16px;font-size:20.60px;color:#fafafa;letter-spacing:0.000px;">£1,475</div>
<div class="b" style="left:2277.80px;top:1320.00px;width:25.00px;height:25.00px;background:#1b251c;border-radius:6px;"></div>
<div class="b" style="left:2281.20px;top:1323.50px;width:18.00px;height:18.00px;background:#7fd07f;border-radius:50%;"></div>
<svg class="i" style="left:2309.60px;top:1323.50px;width:19px;height:19px" viewBox="0 0 24 24" fill="none" stroke="#6f8ff0" stroke-width="1.6" stroke-linecap="round" stroke-linejoin="round"><path d="M5 12h14"/><path d="M12 5v14"/></svg>
<div class="b" style="left:0.00px;top:1360.00px;width:2379.00px;height:13.00px;background:#09090b;border-top:1px solid #2e2e33;"></div>
</body></html>
